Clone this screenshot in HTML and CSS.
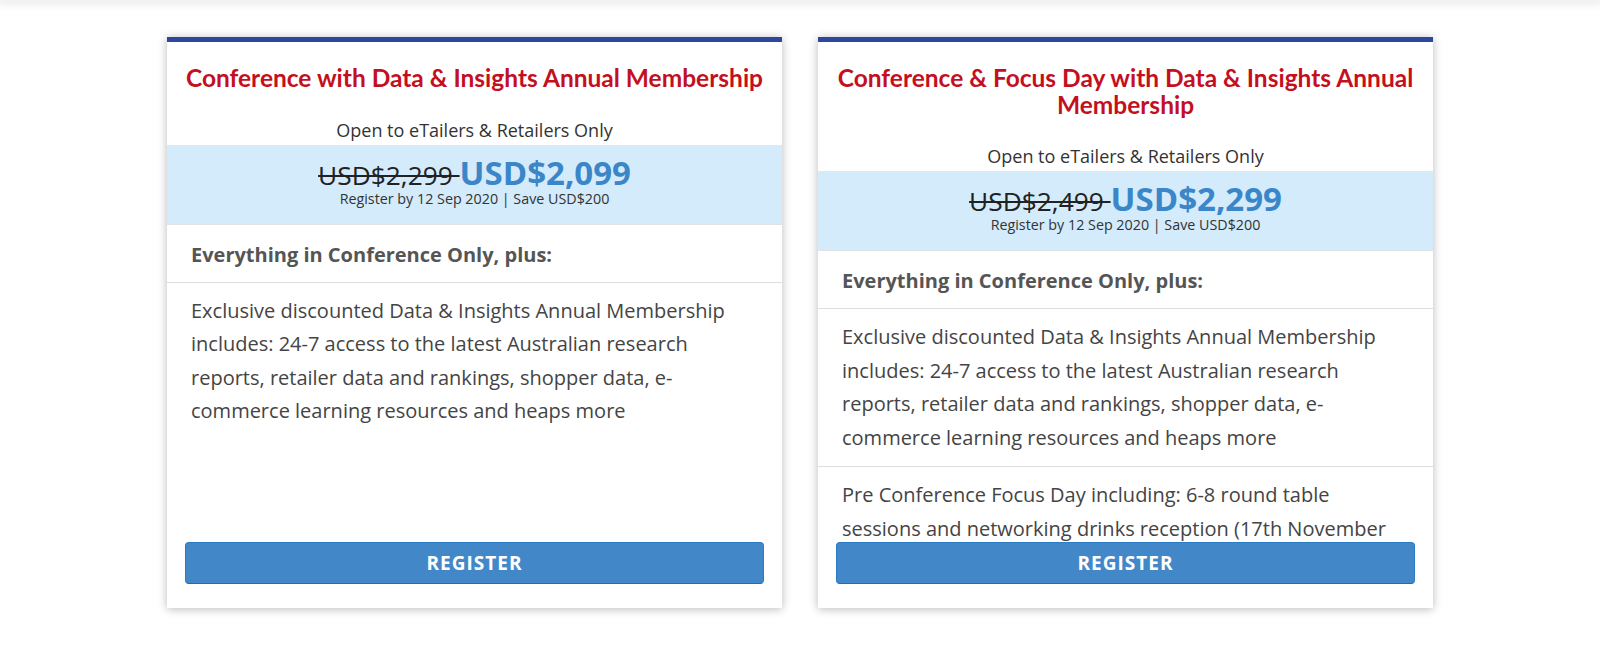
FILE: index.html
```html
<!DOCTYPE html>
<html lang="en">
<head>
<meta charset="utf-8">
<title>Pricing</title>
<link rel="stylesheet" href="styles.css">
</head>
<body>
<div class="topshade"></div>
<main class="plans">
  <section class="card">
    <h2 class="title">Conference with Data &amp; Insights Annual Membership</h2>
    <p class="subtitle">Open to eTailers &amp; Retailers Only</p>
    <div class="band">
      <div class="price"><span class="old">USD$2,299 </span><span class="new">USD$2,099</span></div>
      <div class="note">Register by 12 Sep 2020 | Save USD$200</div>
    </div>
    <h3 class="lead">Everything in Conference Only, plus:</h3>
    <ul class="features">
      <li>Exclusive discounted Data &amp; Insights Annual Membership includes: 24-7 access to the latest Australian research reports, retailer data and rankings, shopper data, e-commerce learning resources and heaps more</li>
    </ul>
    <a class="btn" href="#">REGISTER</a>
  </section>
  <section class="card">
    <h2 class="title">Conference &amp; Focus Day with Data &amp; Insights Annual Membership</h2>
    <p class="subtitle">Open to eTailers &amp; Retailers Only</p>
    <div class="band">
      <div class="price"><span class="old">USD$2,499 </span><span class="new">USD$2,299</span></div>
      <div class="note">Register by 12 Sep 2020 | Save USD$200</div>
    </div>
    <h3 class="lead">Everything in Conference Only, plus:</h3>
    <ul class="features">
      <li>Exclusive discounted Data &amp; Insights Annual Membership includes: 24-7 access to the latest Australian research reports, retailer data and rankings, shopper data, e-commerce learning resources and heaps more</li>
      <li>Pre Conference Focus Day including: 6-8 round table sessions and networking drinks reception (17th November 2020)</li>
    </ul>
    <a class="btn" href="#">REGISTER</a>
  </section>
</main>
</body>
</html>
```
FILE: styles.css
```css
html, body {
  margin: 0;
  padding: 0;
  background: #ffffff;
}

body {
  font-family: "Open Sans", "Liberation Sans", sans-serif;
  color: #333333;
  height: 648px;
  overflow: hidden;
}

.topshade {
  height: 0;
  box-shadow: 0 0 10px 3px rgba(0, 0, 0, 0.12);
}

.plans {
  display: flex;
  justify-content: center;
  gap: 36px;
  padding-top: 37px;
}

.card {
  box-sizing: border-box;
  width: 615px;
  height: 571px;
  display: flex;
  flex-direction: column;
  background: #ffffff;
  border-top: 5px solid #2c479d;
  box-shadow: 0 1px 9px rgba(0, 0, 0, 0.28);
}

.title {
  margin: 0;
  padding: 23px 14px 0;
  font-family: Lato, "Liberation Sans", sans-serif;
  font-weight: 700;
  font-size: 24.5px;
  line-height: 26.5px;
  color: #c4101e;
  text-align: center;
}

.subtitle {
  margin: 27px 0 0;
  padding-bottom: 4px;
  font-size: 18px;
  line-height: 22px;
  color: #333333;
  text-align: center;
}

.band {
  background: #d3ebfb;
  border-bottom: 1px solid #e1e4e6;
  padding: 11px 10px 16px;
  text-align: center;
}

.price {
  display: flex;
  justify-content: center;
  align-items: baseline;
  height: 34px;
  line-height: 34px;
  white-space: nowrap;
}

.old {
  white-space: pre;
  font-size: 26.3px;
  color: #222222;
  text-decoration: line-through;
  text-decoration-thickness: 2px;
}

.new {
  font-size: 33px;
  font-weight: 700;
  color: #3b86c8;
}

.note {
  font-size: 14.3px;
  line-height: 18px;
  color: #333333;
}

.lead {
  margin: 0;
  padding: 18px 24px 15px;
  font-size: 20px;
  line-height: 24px;
  font-weight: 700;
  color: #555555;
  border-bottom: 1px solid #dedede;
}

.features {
  flex: 1;
  min-height: 0;
  overflow: hidden;
  list-style: none;
  margin: 0;
  padding: 0;
}

.features li {
  padding: 11px 40px 12px 24px;
  font-size: 20px;
  line-height: 33.5px;
  color: #444444;
  border-bottom: 1px solid #dedede;
}

.features li:last-child {
  border-bottom: none;
}

.btn {
  display: block;
  margin: 0 18px 24px;
  height: 42px;
  box-sizing: border-box;
  background: #4288c8;
  border: 1px solid #2a7bc4;
  border-bottom-color: #1a6fbd;
  border-radius: 4px;
  color: #ffffff;
  font-weight: 700;
  font-size: 19px;
  letter-spacing: 1px;
  line-height: 40px;
  text-align: center;
  text-decoration: none;
}
```
